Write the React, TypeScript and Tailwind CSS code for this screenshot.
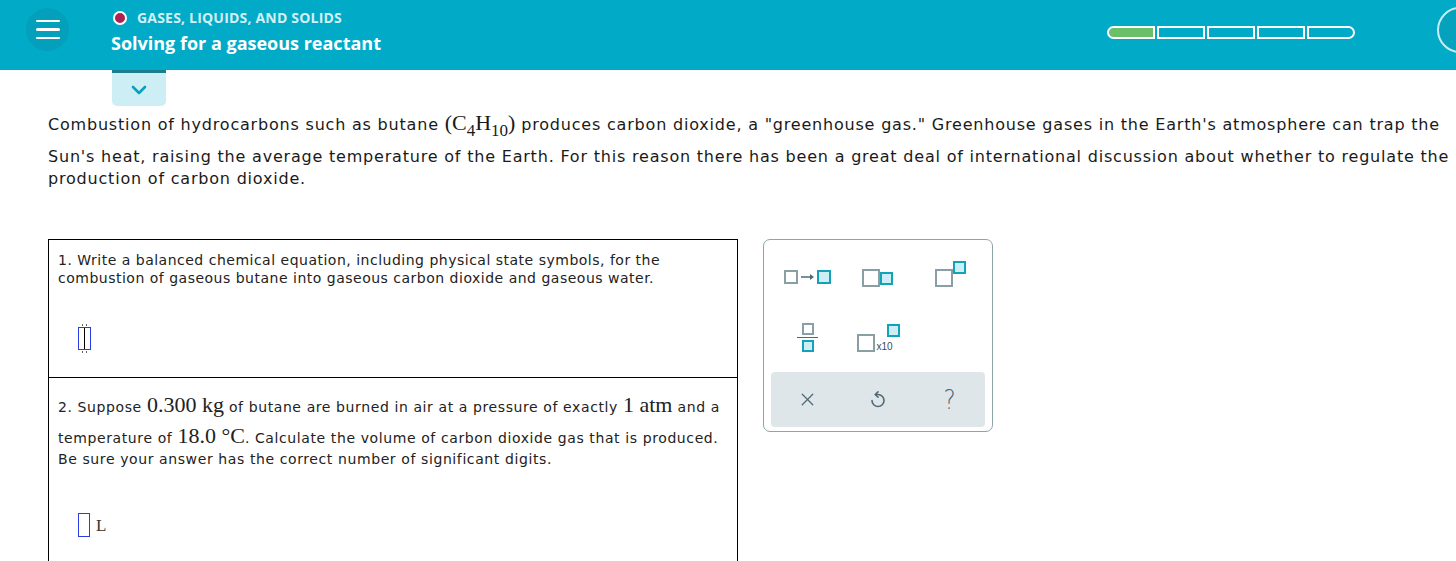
import { X } from 'lucide-react';

const serif = "font-['Liberation_Serif',serif]";

function Box({ active = false, size = 'w-[14px] h-[14px]' }: { active?: boolean; size?: string }) {
  return (
    <span
      className={`inline-block ${size} border-2 ${
        active ? 'border-[#12a3ba] bg-[#cdeef4]' : 'border-[#8a9ea6] bg-white'
      }`}
    />
  );
}

function Palette() {
  return (
    <div className="w-[230px] h-[193px] border border-[#8fa3ab] rounded-[7px] bg-white px-[7px] pt-[7px] flex flex-col">
      <div className="grid grid-cols-3 h-[58px] items-center">
        <div className="flex items-center justify-center gap-[2px] pt-[2px] pl-[2px]">
          <Box />
          <svg width="15" height="8" viewBox="0 0 15 8">
            <path d="M1 4h11" stroke="#4f6a74" strokeWidth="1.5" />
            <path d="M10 1l4 3-4 3z" fill="#4f6a74" />
          </svg>
          <Box active />
        </div>
        <div className="flex items-end justify-center pt-[2px]">
          <Box size="w-[18px] h-[18px]" />
          <span className="mb-[-5px]">
            <Box active size="w-[13px] h-[13px]" />
          </span>
        </div>
        <div className="flex items-start justify-center pt-[2px] pl-[2px]">
          <span className="mt-[8px]">
            <Box size="w-[18px] h-[18px]" />
          </span>
          <Box active size="w-[13px] h-[13px]" />
        </div>
      </div>
      <div className="grid grid-cols-3 h-[65px] items-center">
        <div className="flex flex-col items-center justify-center gap-[2px] pl-[2px]">
          <Box size="w-[12px] h-[12px]" />
          <span className="block w-[21px] h-[1.5px] bg-[#4f6a74]" />
          <Box active size="w-[12px] h-[12px]" />
        </div>
        <div className="flex items-end justify-center pt-[10px] pr-[6px]">
          <Box size="w-[18px] h-[18px]" />
          <span className="relative text-[10px] leading-none text-[#3c4c52] font-['Liberation_Sans',sans-serif] ml-[1px]">
            x10
            <span className="absolute left-[11px] top-[-18px]">
              <Box active size="w-[13px] h-[13px]" />
            </span>
          </span>
        </div>
        <div />
      </div>
      <div className="mt-[2px] h-[55px] bg-[#dfe6e9] rounded-[4px] grid grid-cols-3 items-center text-[#4f6a74]">
        <div className="flex justify-center pl-[2px]">
          <X className="w-[21px] h-[21px]" strokeWidth={1.5} />
        </div>
        <div className="flex justify-center">
          <svg width="20" height="20" viewBox="0 0 20 20" fill="none" stroke="#4f6a74" strokeWidth="1.6" strokeLinecap="round" strokeLinejoin="round">
            <path d="M7.5 4.5H10a6 6 0 1 1-6 6" />
            <path d="M10 1.8L7.2 4.5 10 7.2" />
          </svg>
        </div>
        <div className="flex justify-center text-[27px] leading-none font-['DejaVu_Sans',sans-serif] font-light text-[#4f6a74] scale-x-[0.85]">
          ?
        </div>
      </div>
    </div>
  );
}

export default function App() {
  return (
    <div className="w-[1456px] h-[561px] overflow-hidden bg-white font-['DejaVu_Sans',sans-serif] text-[#222]">
      {/* Header */}
      <div className="h-[70px] bg-[#01abc8] flex items-start relative">
        <div className="ml-[26px] mt-[8px] w-[43px] h-[43px] rounded-full bg-[#039fbb] flex flex-col items-center justify-center gap-[6px]">
          <span className="block w-[24px] h-[2.5px] bg-white rounded" />
          <span className="block w-[24px] h-[2.5px] bg-white rounded" />
          <span className="block w-[24px] h-[2.5px] bg-white rounded" />
        </div>
        <div className="ml-[42px] mt-[11px] flex flex-col font-['Open_Sans',sans-serif] text-white">
          <div className="flex items-center gap-[10px] text-[14px] font-bold text-[#d4f0f5] leading-none tracking-[0.2px]">
            <span className="ml-[2px] w-[14px] h-[14px] rounded-full bg-[#ad2251] border-2 border-white" />
            GASES, LIQUIDS, AND SOLIDS
          </div>
          <div className="mt-[9px] text-[18px] font-bold leading-none">Solving for a gaseous reactant</div>
        </div>
        <div className="ml-auto mr-[101px] mt-[26px] flex gap-[2px] h-[13px]">
          <div className="w-[48px] border-2 border-white bg-[#6abf69] rounded-l-full" />
          <div className="w-[48px] border-2 border-white" />
          <div className="w-[48px] border-2 border-white" />
          <div className="w-[48px] border-2 border-white" />
          <div className="w-[48px] border-2 border-white rounded-r-full" />
        </div>
        <div className="absolute left-[1437px] top-[7px] w-[46px] h-[46px] rounded-full border-2 border-[#c8eef5] bg-[#04a2bd]" />
      </div>

      {/* Collapse tab */}
      <div className="ml-[112px] w-[54px] h-[36px] bg-[#cdeef4] border-t-[3px] border-[#1b7d8e] rounded-b-[5px] flex items-center justify-center">
        <svg width="16" height="10" viewBox="0 0 16 10">
          <path d="M2 2l6 6 6-6" fill="none" stroke="#06a1bd" strokeWidth="2.6" strokeLinecap="round" strokeLinejoin="round" />
        </svg>
      </div>

      {/* Intro */}
      <div className="pl-[48px] text-[16px] text-[#1a1a1a] tracking-[0.8px]">
        <p className="leading-[38px] whitespace-nowrap relative top-[-2px]">
          Combustion of hydrocarbons such as butane{' '}
          <span className={`${serif} text-[22px] tracking-normal`}>
            (C<sub className="text-[17px] relative top-[6px]">4</sub>H<sub className="text-[17px] relative top-[6px]">10</sub>)
          </span>{' '}
          produces carbon dioxide, a "greenhouse gas." Greenhouse gases in the Earth's atmosphere can trap the
        </p>
        <p className="leading-[22px] whitespace-nowrap">
          Sun's heat, raising the average temperature of the Earth. For this reason there has been a great deal of international discussion about whether to regulate the
        </p>
        <p className="leading-[22px]">production of carbon dioxide.</p>
      </div>

      {/* Questions + palette */}
      <div className="mt-[49px] pl-[48px] flex items-start gap-[25px]">
        <div className="w-[690px] border border-black text-[14px] text-[#222] tracking-[0.5px]">
          <div className="h-[138px] px-[9px] pt-[11px] border-b border-black">
            <p className="leading-[18px] whitespace-nowrap">
              1. Write a balanced chemical equation, including physical state symbols, for the
              <br />
              combustion of gaseous butane into gaseous carbon dioxide and gaseous water.
            </p>
            <div className="mt-[40px] ml-[20px] relative w-[13px] h-[23px] border-[1.5px] border-[#2b3be8] flex justify-center">
              <span className="block w-[1.5px] h-full bg-black" />
              <span className="absolute top-[-4px] w-[5px] h-[2px] border-x border-[#666]" />
              <span className="absolute bottom-[-4px] w-[5px] h-[2px] border-x border-[#666]" />
            </div>
          </div>
          <div className="h-[190px] px-[9px] pt-[12px] tracking-[0.6px]">
            <p className="leading-[30px] whitespace-nowrap">
              2. Suppose <span className={`${serif} text-[22px] tracking-normal`}>0.300 kg</span> of butane are burned in air at a pressure of exactly{' '}
              <span className={`${serif} text-[22px] tracking-normal`}>1 atm</span> and a
            </p>
            <p className="leading-[27px] whitespace-nowrap">
              temperature of <span className={`${serif} text-[22px] tracking-normal`}>18.0 °C</span>. Calculate the volume of carbon dioxide gas that is produced.
            </p>
            <p className="leading-[14px] whitespace-nowrap">Be sure your answer has the correct number of significant digits.</p>
            <div className="mt-[47px] ml-[20px] flex items-end gap-[6px]">
              <span className="block w-[12px] h-[24px] border-[1.5px] border-[#2b3be8]" />
              <span className={`${serif} text-[17px] leading-none text-[#333] mb-[3px]`}>L</span>
            </div>
          </div>
        </div>
        <Palette />
      </div>
    </div>
  );
}
